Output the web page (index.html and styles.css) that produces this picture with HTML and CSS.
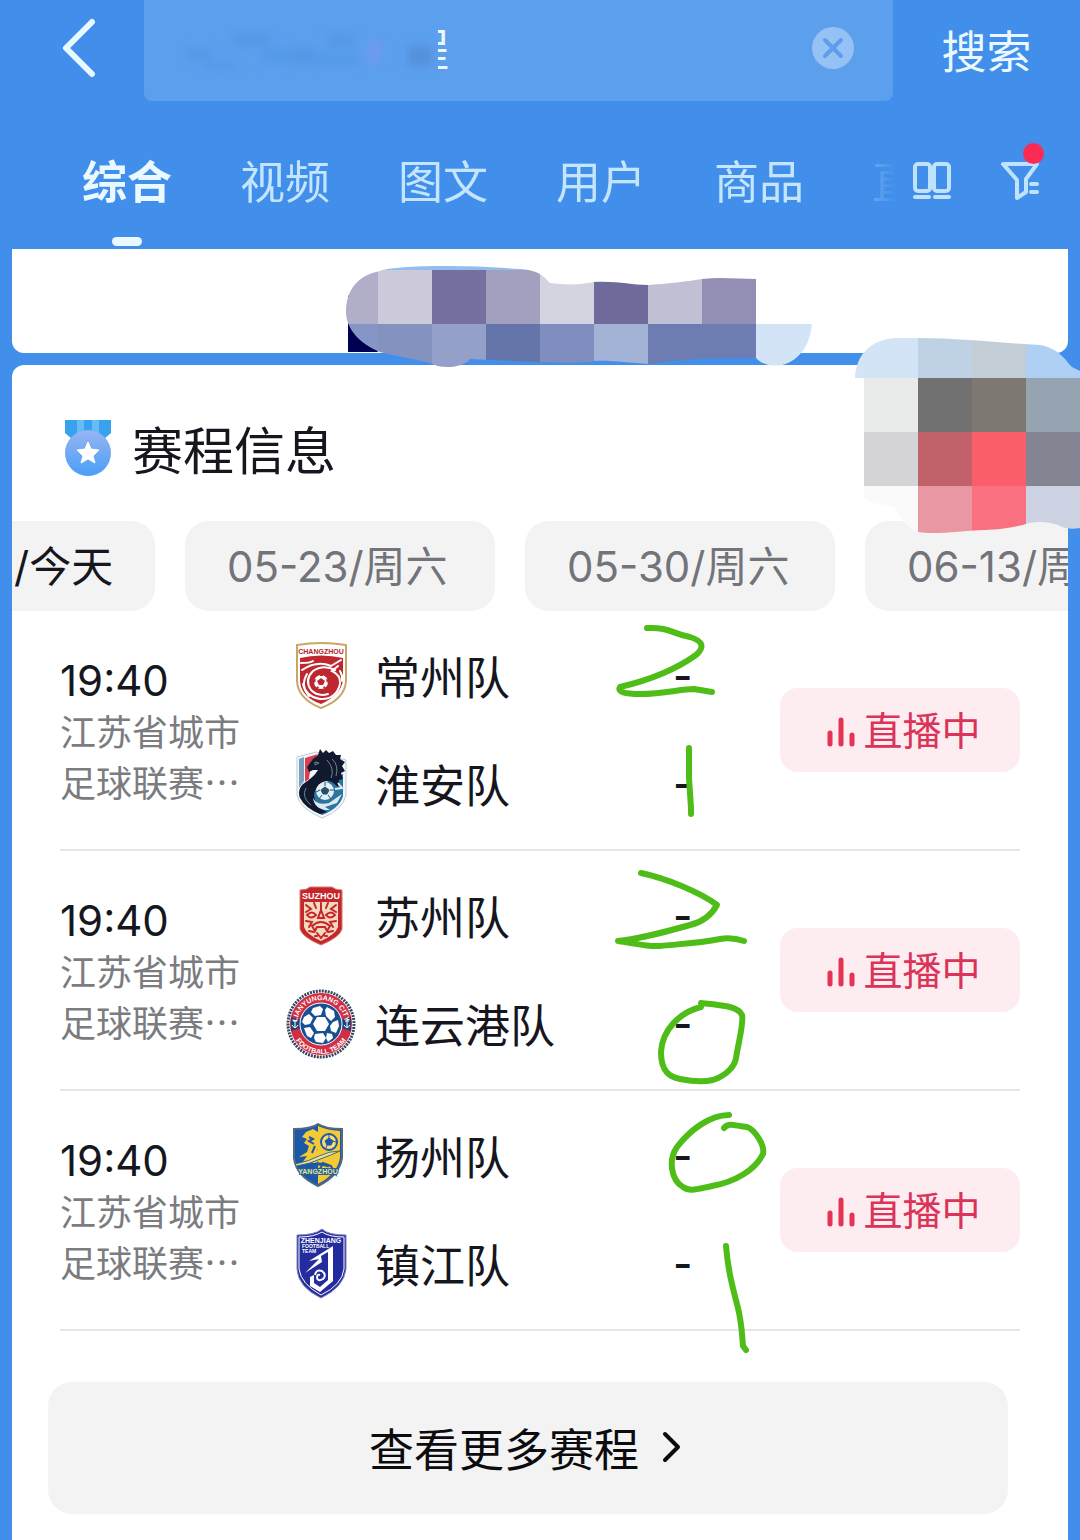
FILE: index.html
```html
<!DOCTYPE html>
<html lang="zh-CN">
<head>
    <meta charset="UTF-8">
    <meta name="viewport" content="width=device-width, initial-scale=1.0">
    <title>赛程信息</title>
    <link rel="stylesheet" href="styles.css">
</head>
<body>
    <div class="page">
        <header>
            <form class="search-bar">
                <button type="button" class="back" aria-label="返回">
                    <svg width="36" height="60" viewBox="0 0 36 60"><path d="M31 4 5 30l26 26" fill="none" stroke="#eaf9ff" stroke-width="6" stroke-linecap="round" stroke-linejoin="round"/></svg>
                </button>
                <div class="search-box">
                    <input type="text" class="search-input" aria-label="搜索" value="程">
                    <svg class="smudge" width="260" height="56" viewBox="0 0 260 56">
                        <defs><filter id="soft"><feGaussianBlur stdDeviation="4"/></filter></defs>
                        <rect width="260" height="56" fill="#5c9fed"/>
                        <g filter="url(#soft)">
                            <path d="M8 26h24v12H8zM56 10h36v14H56zM108 24h30v20h-30zM150 12h26v14h-26z" fill="#5599e6"/>
                            <path d="M24 40h34v8H24zM84 26h22v16H84zM140 30h40v14h-40z" fill="#559aeb"/>
                            <path d="M190 20h12v20h-12z" fill="#7499ec"/>
                            <path d="M230 24h24v20h-24z" fill="#5590dc"/>
                        </g>
                    </svg>
                    <button type="button" class="clear" aria-label="清除">
                        <svg width="42" height="42" viewBox="0 0 42 42"><circle cx="21" cy="21" r="21" fill="#95c1f4"/><path d="m13 13 16 16M29 13 13 29" stroke="#5c9eeb" stroke-width="4" stroke-linecap="round"/></svg>
                    </button>
                </div>
                <button type="submit" class="search-btn">搜索</button>
            </form>
            <div class="nav">
                <nav class="tabs">
                    <a href="#" class="tab active">综合</a>
                    <a href="#" class="tab">视频</a>
                    <a href="#" class="tab">图文</a>
                    <a href="#" class="tab">用户</a>
                    <a href="#" class="tab">商品</a>
                    <a href="#" class="tab">直播</a>
                </nav>
                <div class="tools">
                    <button type="button" aria-label="双列">
                        <svg width="40" height="40" viewBox="0 0 40 40" fill="none" stroke="#bfe3ff" stroke-width="4" stroke-linecap="round"><rect x="3" y="3" width="15" height="27" rx="3"/><rect x="22" y="3" width="15" height="27" rx="3"/><path d="M3 36h14M23 36h14"/></svg>
                    </button>
                    <button type="button" class="filter" aria-label="筛选">
                        <svg width="40" height="40" viewBox="0 0 40 40" fill="none" stroke="#bfe3ff" stroke-width="4" stroke-linecap="round" stroke-linejoin="round"><path d="M3 3h34L26 18v13l-9 6V19z"/><path d="M31 23h6M31 31h6"/></svg>
                        <span class="dot"></span>
                    </button>
                </div>
            </div>
        </header>

        <section class="card banner"></section>

        <section class="card schedule">
            <h2 class="title">
                <svg width="46" height="56" viewBox="0 0 46 56">
                    <defs><linearGradient id="medal" x1="0" y1="0" x2="0" y2="1"><stop offset="0" stop-color="#98b4f4"/><stop offset="1" stop-color="#499ff7"/></linearGradient></defs>
                    <path d="M0 0h46v13l-7 6H7l-7-6z" fill="#38a2ee"/>
                    <path d="M12 0h7v16h-7zM27 0h7v16h-7z" fill="#65bdf8"/>
                    <circle cx="23" cy="33" r="23" fill="url(#medal)"/>
                    <path d="m23 22 3 7 8 1-6 6 2 7-7-4-7 4 2-7-6-6 8-1z" fill="#fff" stroke="#fff" stroke-width="1" stroke-linejoin="round"/>
                </svg>
                赛程信息
            </h2>

            <div class="dates">
                <button type="button" class="date today">/今天</button>
                <button type="button" class="date">05-23/周六</button>
                <button type="button" class="date">05-30/周六</button>
                <button type="button" class="date">06-13/周六</button>
            </div>

            <ul class="matches">
                <li class="match">
                    <div class="info">
                        <div class="time">19:40</div>
                        <div class="league">江苏省城市<br>足球联赛…</div>
                    </div>
                    <div class="teams">
                        <div class="team">
                            <svg class="logo" viewBox="0 0 72 72">
                                <path d="M12 5q24-4 49 0v36q-1 18-25 27Q13 59 12 41z" fill="#fff" stroke="#c8a765" stroke-width="2"/>
                                <path d="M15 18q21-5 43 0v22q-2 15-22 24Q16 57 15 41z" fill="#be2630"/>
                                <text x="36" y="14" class="crest-text" font-size="7" fill="#b5202b">CHANGZHOU</text>
                                <g fill="none" stroke="#fff" stroke-width="2" stroke-linecap="round">
                                    <path d="M16 23q9 0 12-2M17 30q15-10 29-4l10-6"/>
                                    <path d="M50 30q-12-6-22 1-9 9-2 19 7 7 17 4"/>
                                    <path d="M53 26l-6 5q9 4 8 13-4 16-20 15-14-2-17-15"/>
                                    <path d="M22 34q-7 12 2 22M55 31q3 5 2 10"/>
                                </g>
                                <circle cx="36" cy="42" r="9" fill="#be2630"/>
                                <circle cx="36" cy="42" r="7" fill="#fff"/>
                                <path d="m36 38 4 3-2 4h-4l-2-4zM35 34h3v2h-3zM28 40l3-1-1 4zM44 40l-3-1 1 4zM31 48l2-2 1 2zM41 48l-2-2-1 2z" fill="#be2630"/>
                            </svg>
                            <span class="name">常州队</span>
                            <span class="score">-</span>
                        </div>
                        <div class="team">
                            <svg class="logo" viewBox="0 0 72 72">
                                <path d="M12 9 31 4l30 8v35q-3 15-24 23Q14 60 12 47z" fill="#f4f8fb" stroke="#b9cbd8" stroke-width="1"/>
                                <path d="M14 11l5-2v24l-5 7z" fill="#789fbe"/>
                                <path d="M20 10l13-4-7 10-2 15-4 3z" fill="#dc3c50"/>
                                <path d="M58 26v22q-3 12-21 19-17-7-22-20z" fill="#2c759e"/>
                                <path d="M22 19l6-8 5-4 2-6 3 4 3-3 3 3 4-2 3 4h5l-1 4 5 3-3 4 3 5-4 2 2 6-4 1-1 7-6-5q-7-3-13 3-7 7-4 15 3 8 12 12l-7 2q-15-6-20-16-3-8 3-14 11-7 15-14h-5l-4 2z" fill="#11192f"/>
                                <path d="m30 14 4 1-4 2zM42 12q8 9 4 18M47 11q7 6 4 17M21 40q-5 9 5 17" fill="none" stroke="#718398" stroke-width="1"/>
                                <circle cx="40" cy="43" r="9" fill="#e2f0f6"/>
                                <path d="m40 39 4 3-2 4h-4l-2-4zM31 44l4-2M49 42h-4M43 47l3 4M37 47l-3 4M40 38v-4" fill="#234f72" stroke="#234f72"/>
                                <path d="M28 50q4 8 16 5l13-9-5 9-12 4 5 3q-15 1-17-12" fill="#dcebf2"/>
                                <path d="M53 35l4 5-7 1" fill="none" stroke="#dcebf2" stroke-width="2"/>
                            </svg>
                            <span class="name">淮安队</span>
                            <span class="score">-</span>
                        </div>
                    </div>
                    <button type="button" class="live"><svg width="28" height="30" viewBox="0 0 28 30" stroke="#e63355" stroke-width="5" stroke-linecap="round"><path d="M3 16v11M14 3v24M25 18v9"/></svg>直播中</button>
                </li>

                <li class="match">
                    <div class="info">
                        <div class="time">19:40</div>
                        <div class="league">江苏省城市<br>足球联赛…</div>
                    </div>
                    <div class="teams">
                        <div class="team">
                            <svg class="logo" viewBox="0 0 72 72">
                                <path d="M15 10q7 0 10-3h22q3 3 10 3v39q-2 8-21 16-19-8-21-16z" fill="#c5262c" stroke="#d8786d" stroke-width="1"/>
                                <text x="36" y="19" class="crest-text" font-size="9" fill="#fff">SUZHOU</text>
                                <path d="M19 22h34v25q-2 7-17 14-15-7-17-14z" fill="#f4d9be"/>
                                <g fill="none" stroke="#c5262c" stroke-width="2" stroke-linecap="round">
                                    <path d="M21 25l5 4-5 3M51 25l-5 4 5 3M29 23l2 5M43 23l-2 5M36 23v7l-3 8h6l-3-8"/>
                                    <path d="M22 35q5-5 9 0-5 5-9 0zM41 35q5-5 9 0-5 5-9 0z"/>
                                    <path d="M21 41l6 1-3 5M51 41l-6 1 3 5M27 46q9-8 18 0l-3 5-2-4h-8l-2 4z"/>
                                    <path d="M24 51l5 1M48 51l-5 1M32 53l4 5 4-5M30 56h2M40 56h2"/>
                                </g>
                            </svg>
                            <span class="name">苏州队</span>
                            <span class="score">-</span>
                        </div>
                        <div class="team">
                            <svg class="logo" viewBox="0 0 72 72">
                                <defs>
                                    <path id="arc-top" d="M12 36a24 24 0 0 1 48 0"/>
                                    <path id="arc-bottom" d="M6 36a30 30 0 0 0 60 0"/>
                                </defs>
                                <circle cx="36" cy="36" r="33" fill="#fff" stroke="#34465f" stroke-width="3" stroke-dasharray="2 1"/>
                                <circle cx="36" cy="36" r="31" fill="#d02e44"/>
                                <path d="m6 29 10 3v8L6 43zM66 29l-10 3v8l10 3z" fill="#1d4479"/>
                                <path d="M10 32v8m-3-3q3 5 6 0m-5-4h4M62 32v8m-3-3q3 5 6 0m-5-4h4" fill="none" stroke="#fff" stroke-width="1"/>
                                <text class="crest-text" font-size="7" fill="#fff"><textPath href="#arc-top" startOffset="50%">LIANYUNGANG CITY</textPath></text>
                                <text class="crest-text" font-size="7" fill="#fff"><textPath href="#arc-bottom" startOffset="50%">FOOTBALL TEAM</textPath></text>
                                <circle cx="36" cy="36" r="21" fill="#174e94" stroke="#fff" stroke-width="1"/>
                                <g fill="#fff">
                                    <path d="m32 29 8 0 4 7-4 7h-8l-4-7z"/>
                                    <path d="m28 20 7-2 3 3-2 6-6 1-4-4zM42 19l7 4 1 6-4 4-5-5-1-6z"/>
                                    <path d="m19 29 5-3 4 4-3 6-5 1-3-3zM48 34l5-2 1 6-3 7-5-2-1-5z"/>
                                    <path d="m19 40 6-1 4 6-3 5-4-2zM30 46l8-1 3 5-3 5-7-1-2-4zM42 45l5 1 1 4-5 4-2-4z"/>
                                </g>
                            </svg>
                            <span class="name">连云港队</span>
                            <span class="score">-</span>
                        </div>
                    </div>
                    <button type="button" class="live"><svg width="28" height="30" viewBox="0 0 28 30" stroke="#e63355" stroke-width="5" stroke-linecap="round"><path d="M3 16v11M14 3v24M25 18v9"/></svg>直播中</button>
                </li>

                <li class="match">
                    <div class="info">
                        <div class="time">19:40</div>
                        <div class="league">江苏省城市<br>足球联赛…</div>
                    </div>
                    <div class="teams">
                        <div class="team">
                            <svg class="logo" viewBox="0 0 72 72">
                                <path d="M9 9q17 0 24-5 8 5 24 5v29q-3 18-24 28Q11 56 9 38z" fill="#1c58a8" stroke="#526a7b" stroke-width="2"/>
                                <path d="M33 6q8 4 22 5v27q-3 16-22 26z" fill="#f3ca35"/>
                                <path d="m21 12 7-3 5 3 4 5-3 4 3 5-5 4 8 3-3 5 4 5-8-2-4 4-3-5-9 3 5-7-8 1 8-5 2-6-5-3 3-4-5-2z" fill="#f3ca35"/>
                                <path d="m24 17 4 2-4 2 5 3M30 26l-3 7M38 43l8 3 4 8-6-4-9-1z" fill="none" stroke="#1c58a8" stroke-width="2"/>
                                <circle cx="44" cy="22" r="8" fill="#f7dc70" stroke="#1c58a8" stroke-width="2"/>
                                <path d="m44 18 4 3-2 4h-4l-2-4zM44 14v4M51 22l-3-1M41 28l1-3" fill="#1c58a8" stroke="#1c58a8"/>
                                <path d="M10 44q15-3 24-8 10-5 21-5-9 4-17 7-13 6-27 8z" fill="#f6e08b" stroke="#376b8c" stroke-width="1"/>
                                <path d="M22 46q12-4 22 0" fill="none" stroke="#1c58a8" stroke-width="3"/>
                                <text x="33" y="54" class="crest-text" font-size="7" fill="#dfe5a1" stroke="#285d91" stroke-width="2" paint-order="stroke">YANGZHOU</text>
                            </svg>
                            <span class="name">扬州队</span>
                            <span class="score">-</span>
                        </div>
                        <div class="team">
                            <svg class="logo" viewBox="0 0 72 72">
                                <path d="M12 7q18 0 25-6 6 6 24 6v34q-2 18-25 29Q13 59 12 41z" fill="#252ba0" stroke="#7c82bd" stroke-width="1"/>
                                <path d="M14 9q15 0 23-5 7 5 22 5v32q-2 16-23 26Q16 56 14 41z" fill="#242b9d" stroke="#fff" stroke-width="1"/>
                                <text x="36" y="15" class="crest-text" font-size="7" fill="#fff">ZHENJIANG</text>
                                <text x="17" y="20" class="crest-small" font-size="5" fill="#fff">FOOTBALL</text>
                                <text x="17" y="25" class="crest-small" font-size="5" fill="#fff">TEAM</text>
                                <path d="M48 18 24 33l10-2-14 14 17-11-1-6 7-4v28l-8 7-6-4v-8l-4 2v9l10 6 13-11z" fill="#fff"/>
                                <path d="M30 47q1-6 7-4 5 4 1 8-5 3-6-1 0-4 3-3" fill="none" stroke="#fff" stroke-width="2"/>
                            </svg>
                            <span class="name">镇江队</span>
                            <span class="score">-</span>
                        </div>
                    </div>
                    <button type="button" class="live"><svg width="28" height="30" viewBox="0 0 28 30" stroke="#e63355" stroke-width="5" stroke-linecap="round"><path d="M3 16v11M14 3v24M25 18v9"/></svg>直播中</button>
                </li>
            </ul>

            <button type="button" class="more">查看更多赛程<svg width="20" height="32" viewBox="0 0 20 32"><path d="m4 3 13 13L4 29" fill="none" stroke="#0c0c0e" stroke-width="4" stroke-linecap="round" stroke-linejoin="round"/></svg></button>
        </section>

        <!-- mosaic patches and marker strokes drawn over the page -->
        <svg class="overlay" width="1080" height="1540" viewBox="0 0 1080 1540">
            <defs>
                <clipPath id="patch-a"><path d="M346 312c0-22 12-37 34-41 15-5 70-7 140-2 20 1 25 9 30 14 15 2 30 2 44-1 26-1 36 3 54 3 17-1 42-4 54-6 18-2 38 0 54 0v45h56c-2 21-12 36-30 41-12 2-20-1-26-7-26-1-54 0-84 3l-24 3c-18-1-38-4-54-3-14 4-74 0-124-2-5 7-25 12-40 4-15-4-35-7-50-11-18-7-34-22-34-40z"/></clipPath>
                <clipPath id="patch-b"><path d="M855 378c1-23 15-38 40-40h23c42 0 82 5 122 7 20 4 25 15 32 22l8 4v157q-10 2-18-1c-7-4-22-7-36-3-6 2-26 6-41 6-25 1-50 5-67 2-8-2-18-12-23-25-5-2-20-2-31-8V378z"/></clipPath>
            </defs>
            <path d="M348 296l12-9v32l18 33h-30z" fill="#000050"/>
            <g clip-path="url(#patch-a)" shape-rendering="crispEdges">
                <path d="M340 260h420v10H340z" fill="#92bdee"/>
                <path d="M340 266h38v58h-38z" fill="#b0aec9"/>
                <path d="M378 270h54v54h-54z" fill="#cbc9da"/>
                <path d="M432 270h54v54h-54z" fill="#7470a0"/>
                <path d="M486 270h54v54h-54z" fill="#a29fbf"/>
                <path d="M540 270h54v54h-54z" fill="#d4d4e1"/>
                <path d="M594 270h54v54h-54z" fill="#6f6a9c"/>
                <path d="M648 270h54v54h-54z" fill="#c1bfd3"/>
                <path d="M702 270h54v54h-54z" fill="#938fb4"/>
                <path d="M340 324h38v54h-38z" fill="#8595c5"/>
                <path d="M378 324h54v54h-54z" fill="#8392bf"/>
                <path d="M432 324h54v54h-54z" fill="#94a0ca"/>
                <path d="M486 324h54v54h-54z" fill="#6475aa"/>
                <path d="M540 324h54v54h-54z" fill="#7f8dbf"/>
                <path d="M594 324h54v54h-54z" fill="#a3b3d6"/>
                <path d="M648 324h108v54H648z" fill="#6d7db2"/>
                <path d="M756 324h60v54h-60z" fill="#d3e4f6"/>
            </g>
            <g clip-path="url(#patch-b)" shape-rendering="crispEdges">
                <path d="M850 324h68v54h-68z" fill="#d3e4f7"/>
                <path d="M918 324h54v54h-54z" fill="#bfd1e4"/>
                <path d="M972 324h54v54h-54z" fill="#c3cdd6"/>
                <path d="M1026 324h54v54h-54z" fill="#afd0f4"/>
                <path d="M864 378h54v54h-54z" fill="#e8ebea"/>
                <path d="M918 378h54v54h-54z" fill="#717171"/>
                <path d="M972 378h54v54h-54z" fill="#7e7872"/>
                <path d="M1026 378h54v54h-54z" fill="#96a3b0"/>
                <path d="M864 432h54v54h-54z" fill="#d4d4d7"/>
                <path d="M918 432h54v54h-54z" fill="#c1616a"/>
                <path d="M972 432h54v54h-54z" fill="#fb5e6b"/>
                <path d="M1026 432h54v54h-54z" fill="#838592"/>
                <path d="M864 486h54v54h-54z" fill="#fafafa"/>
                <path d="M918 486h54v54h-54z" fill="#e998a3"/>
                <path d="M972 486h54v54h-54z" fill="#fa7081"/>
                <path d="M1026 486h54v54h-54z" fill="#ccd2e1"/>
            </g>
            <g fill="none" stroke="#4fbd18" stroke-width="6" stroke-linecap="round" stroke-linejoin="round">
                <path d="M647 628c23-1 25 6 43 9 13 4 15 10 6 18-21 15-46 25-76 32-3 5 5 7 20 7 25 0 40-5 54-5l18 3"/>
                <path d="M689 748v30l2 30v6"/>
                <path d="M641 873c24 5 59 19 76 32-5 9-14 17-27 20-25 7-50 14-72 16 17 2 27 6 42 5 20-2 40-3 60-7q12-2 24 2"/>
                <path d="M701 1007c-21 5-39 23-40 45 0 20 9 25 19 27q20 4 33 1c15-5 22-15 23-22 3-18 8-36 6-43-4-9-21-10-41-12"/>
                <path d="M729 1115c-19 0-39 15-52 32-9 13-6 33 6 40 7 5 14 2 29-1 23-4 43-16 51-32 2-9-8-24-16-27-12-1-18-5-23 1"/>
                <path d="M726 1246c2 24 6 39 12 62 4 17 4 27 5 38l3 4"/>
            </g>
        </svg>
    </div>
</body>
</html>
```

FILE: styles.css
```css
* {
    box-sizing: border-box;
}

body {
    margin: 0;
    background: #418fea;
    color: #15161e;
    font-family: Inter, "Noto Sans CJK SC", sans-serif;
}

button {
    border: none;
    padding: 0;
    background: none;
    color: inherit;
    font-family: inherit;
    cursor: pointer;
}

svg {
    display: block;
    flex-shrink: 0;
}

.page {
    position: relative;
    display: flex;
    flex-direction: column;
    min-height: 100vh;
    overflow: hidden;
}

/* header */
.search-bar {
    display: flex;
    height: 101px;
}

.back {
    flex: 0 0 144px;
    padding: 0 0 6px 61px;
}

.search-box {
    position: relative;
    flex: 1;
    display: flex;
    align-items: center;
    min-width: 0;
    padding: 0 39px 6px 0;
    border-radius: 0 0 8px 8px;
    background: #5c9fed;
}

.search-input {
    flex: 1;
    min-width: 0;
    height: 66px;
    padding: 0 0 0 260px;
    border: none;
    outline: none;
    background: none;
    color: #eaf9ff;
    font-family: inherit;
    font-size: 45px;
}

/* covers the typed words, leaving the end of the last one */
.smudge {
    position: absolute;
    top: 22px;
    left: 34px;
}

.search-btn {
    flex: 0 0 187px;
    padding-bottom: 2px;
    color: #eaf9ff;
    font-size: 45px;
}

.nav {
    display: flex;
    height: 148px;
}

.tabs {
    flex: 1;
    display: flex;
    gap: 68px;
    min-width: 0;
    padding-left: 82px;
    overflow: hidden;
    mask-image: linear-gradient(to left, transparent, #000 80px);
}

.tab {
    flex-shrink: 0;
    display: flex;
    flex-direction: column;
    align-items: center;
    padding-top: 49px;
    color: #c3e5ff;
    font-size: 45px;
    line-height: 66px;
    text-decoration: none;
}

.tab.active {
    color: #eaf9ff;
    font-weight: bold;
}

.tab.active::after {
    content: "";
    width: 30px;
    height: 9px;
    margin-top: 21px;
    border-radius: 5px;
    background: #eaf9ff;
}

.tools {
    display: flex;
    align-items: flex-start;
    gap: 48px;
    padding: 60px 40px 0 16px;
}

.filter {
    position: relative;
}

.dot {
    position: absolute;
    top: -18px;
    right: -4px;
    width: 21px;
    height: 21px;
    border-radius: 50%;
    background: #fc2b55;
}

/* cards */
.card {
    margin: 0 12px;
    background: #fff;
}

.banner {
    height: 104px;
    border-radius: 0 0 12px 12px;
}

.schedule {
    flex: 1;
    margin-top: 12px;
    padding-bottom: 27px;
    border-radius: 12px 12px 0 0;
}

.title {
    display: flex;
    align-items: center;
    gap: 21px;
    height: 156px;
    margin: 0;
    padding: 10px 0 0 53px;
    font-size: 51px;
    font-weight: normal;
}

.dates {
    display: flex;
    gap: 30px;
    overflow: hidden;
}

.date {
    flex: 0 0 310px;
    height: 90px;
    padding: 0 0 5px 42px;
    border-radius: 24px;
    background: #f3f3f3;
    color: #73747a;
    font-size: 42px;
    text-align: left;
    white-space: nowrap;
}

.date.today {
    flex-basis: 143px;
    padding-left: 2px;
    border-radius: 0 24px 24px 0;
    color: #15161e;
}

/* match list */
.matches {
    margin: 0;
    padding: 0 48px;
    list-style: none;
}

.match {
    display: flex;
    align-items: center;
    height: 240px;
    border-bottom: 2px solid #e6e6e7;
}

.info {
    width: 225px;
}

.time {
    padding-top: 4px;
    font-size: 42px;
    line-height: 48px;
}

.league {
    color: #7b7c80;
    font-family: "Noto Sans CJK SC", sans-serif;
    font-size: 36px;
    line-height: 51px;
}

.teams {
    flex: 1;
    display: grid;
    gap: 36px;
}

.team {
    display: flex;
    align-items: center;
    height: 72px;
}

.logo {
    width: 72px;
    height: 72px;
}

.crest-text,
.crest-small {
    font-family: "Liberation Sans", sans-serif;
    font-weight: bold;
    text-anchor: middle;
}

.crest-small {
    text-anchor: start;
}

.name,
.score {
    padding-bottom: 2px;
}

.name {
    flex: 1;
    padding-left: 18px;
    font-size: 45px;
    white-space: nowrap;
}

.score {
    width: 107px;
    font-size: 42px;
    font-weight: 500;
}

.live {
    display: flex;
    align-items: center;
    justify-content: center;
    gap: 8px;
    width: 240px;
    height: 84px;
    padding: 0 0 4px 8px;
    border-radius: 18px;
    background: #fdedf1;
    color: #dc3358;
    font-size: 39px;
}

.live svg {
    margin-top: 8px;
}

.more {
    display: flex;
    align-items: center;
    justify-content: center;
    gap: 22px;
    width: calc(100% - 96px);
    height: 132px;
    margin: 51px 60px 0 36px;
    padding: 0 6px 2px 0;
    border-radius: 24px;
    background: #f3f3f3;
    color: #0c0c0e;
    font-size: 45px;
}

/* sits over the whole page */
.overlay {
    position: absolute;
    top: 0;
    left: 0;
    pointer-events: none;
}
```
